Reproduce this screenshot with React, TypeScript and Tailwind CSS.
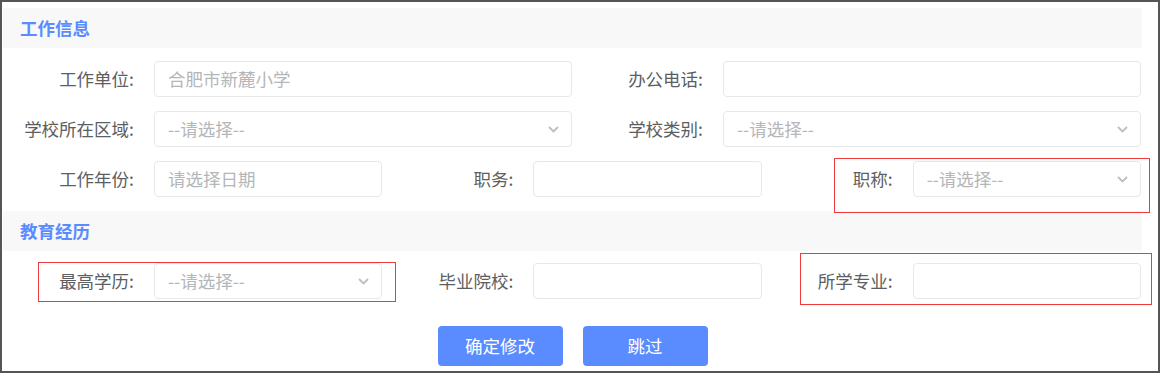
import React from "react";

const font = { fontFamily: '"Noto Sans CJK SC", "Noto Sans", sans-serif' };

function Chevron() {
  return (
    <svg width="11" height="7" viewBox="0 0 11 7" className="shrink-0">
      <polyline points="1,1 5.5,5.5 10,1" fill="none" stroke="#bcbec2" strokeWidth="1.8" />
    </svg>
  );
}

type FieldProps = {
  label: string;
  placeholder?: string;
  select?: boolean;
  span: "half" | "third";
};

function Field({ label, placeholder, select, span }: FieldProps) {
  return (
    <div className={`flex items-center ${span === "half" ? "w-[569px]" : "w-[379.33px]"}`}>
      <label className="w-[151px] shrink-0 pr-[20px] text-right text-[17.5px] text-[#5c5e62] whitespace-nowrap">
        {label}
      </label>
      <div className="flex h-[36px] flex-1 items-center justify-between rounded-[4px] border border-[#e6e8eb] bg-white pl-[13px] pr-[12px]">
        <span className="text-[17.5px] text-[#b4b6ba] whitespace-nowrap">{placeholder}</span>
        {select && <Chevron />}
      </div>
    </div>
  );
}

function SectionTitle({ title }: { title: string }) {
  return (
    <div className="flex h-[40px] items-center bg-[#f8f8f8] pl-[17px]">
      <span className="text-[17.5px] font-bold text-[#5b8cff]">{title}</span>
    </div>
  );
}

export default function App() {
  return (
    <div className="relative h-[373px] w-[1160px] overflow-hidden border-2 border-[#555555] bg-white" style={font}>
      <div className="ml-[1px] mt-[6px] w-[1139px]">
        <SectionTitle title="工作信息" />

        <div className="mt-[13px] flex">
          <Field span="half" label="工作单位:" placeholder="合肥市新麓小学" />
          <Field span="half" label="办公电话:" />
        </div>
        <div className="mt-[14px] flex">
          <Field span="half" label="学校所在区域:" placeholder="--请选择--" select />
          <Field span="half" label="学校类别:" placeholder="--请选择--" select />
        </div>
        <div className="mt-[14px] flex">
          <Field span="third" label="工作年份:" placeholder="请选择日期" />
          <Field span="third" label="职务:" />
          <Field span="third" label="职称:" placeholder="--请选择--" select />
        </div>

        <div className="mt-[14px]">
          <SectionTitle title="教育经历" />
        </div>

        <div className="mt-[12px] flex">
          <Field span="third" label="最高学历:" placeholder="--请选择--" select />
          <Field span="third" label="毕业院校:" />
          <Field span="third" label="所学专业:" />
        </div>

        <div className="mt-[27px] flex justify-center gap-[20px]">
          <button className="h-[40px] w-[125px] rounded-[4px] bg-[#5a8cff] text-[17.5px] text-white">确定修改</button>
          <button className="h-[40px] w-[125px] rounded-[4px] bg-[#5a8cff] text-[17.5px] text-white">跳过</button>
        </div>
      </div>

      {/* red annotation boxes */}
      <div className="pointer-events-none absolute left-[832px] top-[156px] h-[55px] w-[316px] border border-[#ee3b3b]" />
      <div className="pointer-events-none absolute left-[36px] top-[260px] h-[40px] w-[358px] border border-[#ee3b3b]" />
      <div className="pointer-events-none absolute left-[798px] top-[251px] h-[52px] w-[352px] border border-[#ee3b3b]" />
    </div>
  );
}
